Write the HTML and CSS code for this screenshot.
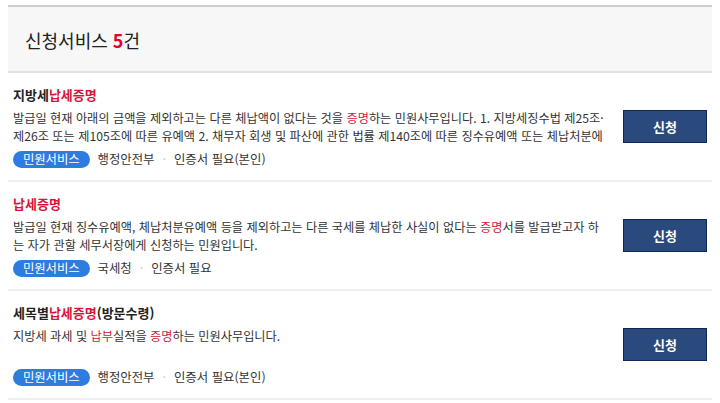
FILE: index.html
```html
<!DOCTYPE html>
<html lang="ko">
<head>
    <meta charset="UTF-8">
    <meta name="viewport" content="width=device-width, initial-scale=1.0">
    <title>신청서비스</title>
    <link rel="stylesheet" href="styles.css">
</head>
<body>
<div class="result">
    <div class="result-head">
        <h2>신청서비스 <strong>5</strong>건</h2>
    </div>

    <ul class="svc-list">
        <li class="svc-item">
            <div class="svc-info">
                <p class="svc-title">지방세<em>납세증명</em></p>
                <p class="svc-desc">발급일 현재 아래의 금액을 제외하고는 다른 체납액이 없다는 것을 <em>증명</em>하는 민원사무입니다. 1. 지방세징수법 제25조·제26조 또는 제105조에 따른 유예액 2. 채무자 회생 및 파산에 관한 법률 제140조에 따른 징수유예액 또는 체납처분에</p>
                <div class="svc-meta">
                    <span class="badge">민원서비스</span>
                    <span class="org">행정안전부</span>
                    <span class="dot">·</span>
                    <span class="cert">인증서 필요(본인)</span>
                </div>
            </div>
            <a class="btn-apply" href="#">신청</a>
        </li>
        <li class="svc-item">
            <div class="svc-info">
                <p class="svc-title"><em>납세증명</em></p>
                <p class="svc-desc">발급일 현재 징수유예액, 체납처분유예액 등을 제외하고는 다른 국세를 체납한 사실이 없다는 <em>증명</em>서를 발급받고자 하는 자가 관할 세무서장에게 신청하는 민원입니다.</p>
                <div class="svc-meta">
                    <span class="badge">민원서비스</span>
                    <span class="org">국세청</span>
                    <span class="dot">·</span>
                    <span class="cert">인증서 필요</span>
                </div>
            </div>
            <a class="btn-apply" href="#">신청</a>
        </li>
        <li class="svc-item">
            <div class="svc-info">
                <p class="svc-title">세목별<em>납세증명</em>(방문수령)</p>
                <p class="svc-desc">지방세 과세 및 <em>납부</em>실적을 <em>증명</em>하는 민원사무입니다.</p>
                <div class="svc-meta">
                    <span class="badge">민원서비스</span>
                    <span class="org">행정안전부</span>
                    <span class="dot">·</span>
                    <span class="cert">인증서 필요(본인)</span>
                </div>
            </div>
            <a class="btn-apply" href="#">신청</a>
        </li>
    </ul>
</div>
</body>
</html>
```

FILE: styles.css
```css
body {
    margin: 5px 8px;
    font-family: "Noto Sans CJK KR", "Noto Sans", sans-serif;
    color: #222;
    background: #fff;
}

.result-head {
    background: #f7f7f7;
    border-top: 2px solid #cdcdcd;
    border-bottom: 2px solid #e2e2e2;
    padding: 21px 17px 19px;
}

.result-head h2 {
    margin: 0;
    font-size: 18px;
    line-height: 24px;
    font-weight: 400;
}

.result-head strong {
    color: #e4002b;
    font-weight: 700;
}

.svc-list {
    list-style: none;
    margin: 0;
    padding: 0;
}

.svc-item {
    display: flex;
    align-items: center;
    padding: 12px 5px 12px;
    border-bottom: 2px solid #efefef;
}

.svc-info {
    flex: 1;
    min-width: 0;
    padding-right: 16px;
}

.svc-title {
    margin: 0;
    font-size: 13px;
    line-height: 20px;
    font-weight: 700;
    color: #222;
}

.svc-title em,
.svc-desc em {
    font-style: normal;
    color: #d7153a;
}

.svc-desc {
    margin: 4px 0 0;
    font-size: 12.2px;
    line-height: 18px;
    height: 36px;
    overflow: hidden;
    color: #333;
}

.svc-meta {
    display: flex;
    align-items: center;
    margin-top: 5px;
    height: 18px;
    font-size: 12.4px;
    color: #333;
}

.badge {
    display: inline-block;
    height: 17px;
    line-height: 17px;
    padding: 0 10px;
    border-radius: 9px;
    background: #2f7ce0;
    color: #fff;
    margin-right: 8px;
    letter-spacing: -0.1px;
}

.dot {
    color: #c8c8c8;
    margin: 0 8px;
}

.btn-apply {
    flex: none;
    width: 82px;
    height: 31px;
    line-height: 31px;
    text-align: center;
    background: #2a4a7d;
    border: 1px solid #0d2857;
    color: #fff;
    font-size: 13px;
    font-weight: 700;
    text-decoration: none;
}
```
